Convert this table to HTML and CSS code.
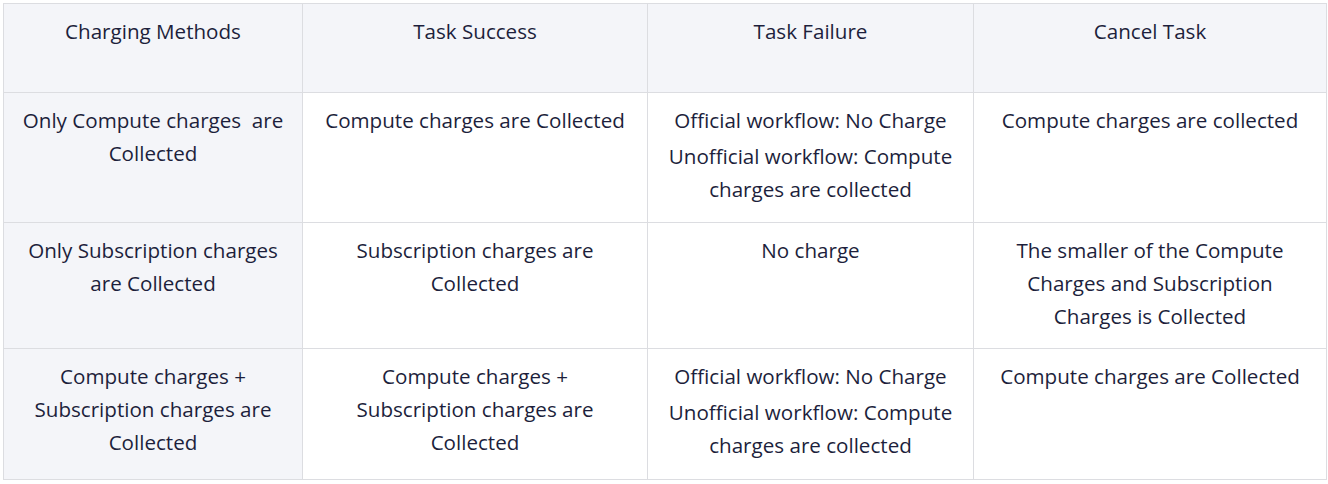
FILE: index.html
```html
<!DOCTYPE html>
<html>
<head>
<meta charset="utf-8">
<link rel="stylesheet" href="styles.css">
</head>
<body>
<div class="wrap">
<table class="grid">
  <colgroup>
    <col class="c1"><col class="c2"><col class="c3"><col class="c4">
  </colgroup>
  <thead>
    <tr class="r0">
      <th>Charging Methods</th>
      <th>Task Success</th>
      <th>Task Failure</th>
      <th>Cancel Task</th>
    </tr>
  </thead>
  <tbody>
    <tr class="r1">
      <td class="lead">Only Compute charges&nbsp; are Collected</td>
      <td>Compute charges are Collected</td>
      <td><div class="p">Official workflow: No Charge</div><div class="p second">Unofficial workflow: Compute charges are collected</div></td>
      <td>Compute charges are collected</td>
    </tr>
    <tr class="r2">
      <td class="lead">Only Subscription charges are Collected</td>
      <td>Subscription charges are Collected</td>
      <td>No charge</td>
      <td>The smaller of the Compute Charges and Subscription Charges is Collected</td>
    </tr>
    <tr class="r3">
      <td class="lead">Compute charges + Subscription charges are Collected</td>
      <td>Compute charges + Subscription charges are Collected</td>
      <td><div class="p">Official workflow: No Charge</div><div class="p second">Unofficial workflow: Compute charges are collected</div></td>
      <td>Compute charges are Collected</td>
    </tr>
  </tbody>
</table>
</div>
</body>
</html>
```
FILE: styles.css
```css
html, body {
  margin: 0;
  padding: 0;
  background: #ffffff;
}
.wrap {
  padding: 3px 0 0 3px;
}
.grid {
  border-collapse: collapse;
  table-layout: fixed;
  width: 1323px;
  font-family: "Open Sans", "Noto Sans", sans-serif;
  font-size: 20.6px;
  line-height: 33px;
  color: #1d1f3c;
}
.c1 { width: 299px; }
.c2 { width: 345px; }
.c3 { width: 326px; }
.c4 { width: 353px; }
.grid th, .grid td {
  border: 1px solid #dcdde1;
  text-align: center;
  vertical-align: top;
  padding: 11px 18px 0;
  font-weight: normal;
}
.grid th {
  background: #f4f5f9;
}
.grid td.lead {
  background: #f4f5f9;
}
.r0 { height: 89px; }
.r1 { height: 130px; }
.r2 { height: 126px; }
.r3 { height: 131px; }
.p.second {
  margin-top: 3px;
}
```
